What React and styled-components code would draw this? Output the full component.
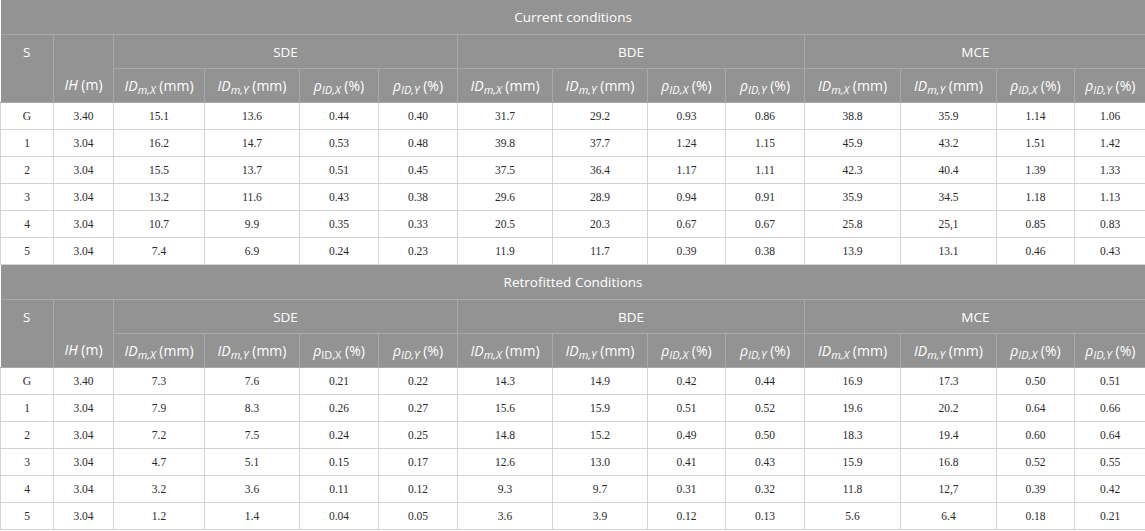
import React from "react";
import styled, { createGlobalStyle } from "styled-components";

const Global = createGlobalStyle`
  html, body { margin: 0; padding: 0; background: #ffffff; }
  body { width: 1145px; overflow: hidden; }
`;

const Table = styled.table`
  width: 1145px;
  table-layout: fixed;
  border-collapse: collapse;
  border-spacing: 0;
`;

const TitleCell = styled.th`
  background: #939393;
  color: #ffffff;
  font-family: "Open Sans", "Noto Sans", sans-serif;
  font-weight: 400;
  font-size: 13.5px;
  height: 34px;
  padding: 0;
  text-align: center;
  vertical-align: middle;
  border-bottom: 1px solid #a9a9a9;
`;

const HeadCell = styled.th`
  background: #939393;
  color: #ffffff;
  font-family: "Open Sans", "Noto Sans", sans-serif;
  font-weight: 400;
  font-size: ${(p) => (p.$label ? "14px" : "13.5px")};
  height: ${(p) => (p.$tall ? "67px" : "33px")};
  padding: ${(p) => (p.$top ? "8px 0 0" : "0")};
  text-align: center;
  vertical-align: ${(p) => (p.$top ? "top" : p.$bottom ? "bottom" : "middle")};
  border: 1px solid #a9a9a9;
  border-top: none;
  white-space: nowrap;
  &:first-child { border-left: none; }
  &:last-child { border-right: none; }
  ${(p) => (p.$bottom ? "padding-bottom: 8px;" : "")}
`;

const DataCell = styled.td`
  height: 26px;
  padding: 0;
  text-align: center;
  vertical-align: middle;
  font-family: "Liberation Serif", "Times New Roman", serif;
  font-size: 11.5px;
  color: #2a2a2a;
  border: 1px solid #d3d3d3;
`;

const It = styled.i`
  font-style: italic;
`;

const Sub = styled.sub`
  font-size: 11px;
  line-height: 0;
  vertical-align: -3px;
  font-style: ${(p) => (p.$upright ? "normal" : "italic")};
`;

const widths = [53, 60, 91, 95, 79, 79, 95, 95, 78, 79, 96, 96, 78, 71];

const current = [
  ["G", "3.40", "15.1", "13.6", "0.44", "0.40", "31.7", "29.2", "0.93", "0.86", "38.8", "35.9", "1.14", "1.06"],
  ["1", "3.04", "16.2", "14.7", "0.53", "0.48", "39.8", "37.7", "1.24", "1.15", "45.9", "43.2", "1.51", "1.42"],
  ["2", "3.04", "15.5", "13.7", "0.51", "0.45", "37.5", "36.4", "1.17", "1.11", "42.3", "40.4", "1.39", "1.33"],
  ["3", "3.04", "13.2", "11.6", "0.43", "0.38", "29.6", "28.9", "0.94", "0.91", "35.9", "34.5", "1.18", "1.13"],
  ["4", "3.04", "10.7", "9.9", "0.35", "0.33", "20.5", "20.3", "0.67", "0.67", "25.8", "25,1", "0.85", "0.83"],
  ["5", "3.04", "7.4", "6.9", "0.24", "0.23", "11.9", "11.7", "0.39", "0.38", "13.9", "13.1", "0.46", "0.43"],
];

const retro = [
  ["G", "3.40", "7.3", "7.6", "0.21", "0.22", "14.3", "14.9", "0.42", "0.44", "16.9", "17.3", "0.50", "0.51"],
  ["1", "3.04", "7.9", "8.3", "0.26", "0.27", "15.6", "15.9", "0.51", "0.52", "19.6", "20.2", "0.64", "0.66"],
  ["2", "3.04", "7.2", "7.5", "0.24", "0.25", "14.8", "15.2", "0.49", "0.50", "18.3", "19.4", "0.60", "0.64"],
  ["3", "3.04", "4.7", "5.1", "0.15", "0.17", "12.6", "13.0", "0.41", "0.43", "15.9", "16.8", "0.52", "0.55"],
  ["4", "3.04", "3.2", "3.6", "0.11", "0.12", "9.3", "9.7", "0.31", "0.32", "11.8", "12,7", "0.39", "0.42"],
  ["5", "3.04", "1.2", "1.4", "0.04", "0.05", "3.6", "3.9", "0.12", "0.13", "5.6", "6.4", "0.18", "0.21"],
];

const IdX = () => (
  <>
    <It>ID</It>
    <Sub>m,X</Sub> (mm)
  </>
);
const IdY = () => (
  <>
    <It>ID</It>
    <Sub>m,Y</Sub> (mm)
  </>
);
const RhoX = ({ upright }) => (
  <>
    <It>ρ</It>
    <Sub $upright={upright}>ID,X</Sub> (%)
  </>
);
const RhoY = () => (
  <>
    <It>ρ</It>
    <Sub>ID,Y</Sub> (%)
  </>
);

function Section({ title, rows, uprightFirst }) {
  const groups = ["SDE", "BDE", "MCE"];
  return (
    <>
      <tr>
        <TitleCell colSpan={14}>{title}</TitleCell>
      </tr>
      <tr>
        <HeadCell rowSpan={2} $top>
          S
        </HeadCell>
        <HeadCell rowSpan={2} $bottom $label>
          <It>IH</It> (m)
        </HeadCell>
        {groups.map((g) => (
          <HeadCell key={g} colSpan={4}>
            {g}
          </HeadCell>
        ))}
      </tr>
      <tr>
        {groups.map((g, i) => (
          <React.Fragment key={g}>
            <HeadCell $label>
              <IdX />
            </HeadCell>
            <HeadCell $label>
              <IdY />
            </HeadCell>
            <HeadCell $label>
              <RhoX upright={uprightFirst && i === 0} />
            </HeadCell>
            <HeadCell $label>
              <RhoY />
            </HeadCell>
          </React.Fragment>
        ))}
      </tr>
      {rows.map((r) => (
        <tr key={r[0]}>
          {r.map((v, j) => (
            <DataCell key={j}>{v}</DataCell>
          ))}
        </tr>
      ))}
    </>
  );
}

export default function App() {
  return (
    <>
      <Global />
      <Table>
        <colgroup>
          {widths.map((w, i) => (
            <col key={i} style={{ width: w }} />
          ))}
        </colgroup>
        <tbody>
          <Section title="Current conditions" rows={current} />
          <Section title="Retrofitted Conditions" rows={retro} uprightFirst />
        </tbody>
      </Table>
    </>
  );
}
